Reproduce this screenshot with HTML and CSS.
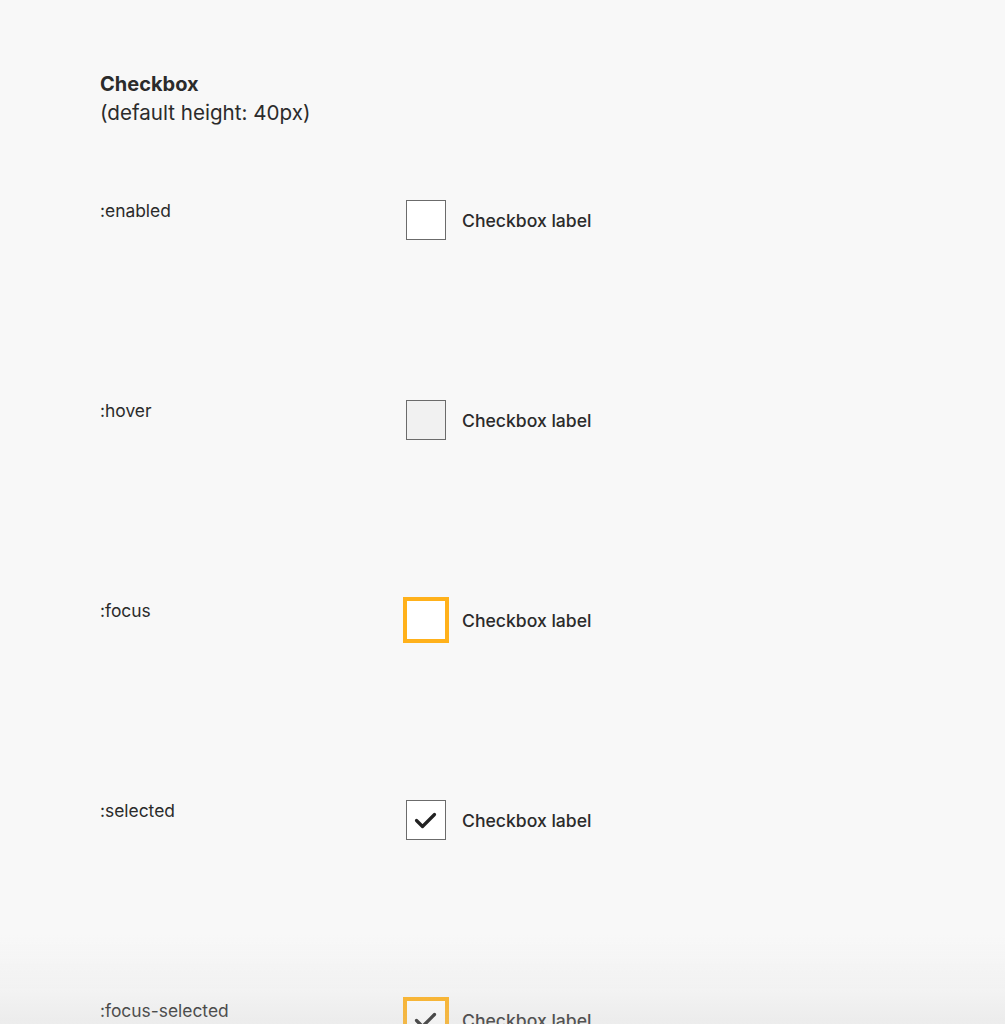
FILE: index.html
```html
<!DOCTYPE html>
<html lang="en">
<head>
<meta charset="utf-8">
<title>Checkbox</title>
<link rel="stylesheet" href="styles.css">
</head>
<body>
<main class="page">
  <header class="intro">
    <h1 class="title">Checkbox</h1>
    <p class="subtitle">(default height: 40px)</p>
  </header>
  <section class="states">
    <div class="row">
      <div class="state">:enabled</div>
      <label class="cb">
        <span class="box"></span>
        <span class="cb-label">Checkbox label</span>
      </label>
    </div>
    <div class="row">
      <div class="state">:hover</div>
      <label class="cb">
        <span class="box box-hover"></span>
        <span class="cb-label">Checkbox label</span>
      </label>
    </div>
    <div class="row">
      <div class="state">:focus</div>
      <label class="cb">
        <span class="box box-focus"></span>
        <span class="cb-label">Checkbox label</span>
      </label>
    </div>
    <div class="row">
      <div class="state">:selected</div>
      <label class="cb">
        <span class="box"><svg class="check" viewBox="0 0 40 40" width="40" height="40"><path d="M10.5 20.5 L16.5 26.5 L28.5 14.5" fill="none" stroke="#222" stroke-width="3.2" stroke-linecap="round" stroke-linejoin="round"/></svg></span>
        <span class="cb-label">Checkbox label</span>
      </label>
    </div>
    <div class="row">
      <div class="state">:focus-selected</div>
      <label class="cb">
        <span class="box box-focus"><svg class="check" viewBox="0 0 40 40" width="40" height="40"><path d="M10.5 20.5 L16.5 26.5 L28.5 14.5" fill="none" stroke="#222" stroke-width="3.2" stroke-linecap="round" stroke-linejoin="round"/></svg></span>
        <span class="cb-label">Checkbox label</span>
      </label>
    </div>
  </section>
</main>
<div class="fade"></div>
</body>
</html>
```

FILE: styles.css
```css
html, body {
  margin: 0;
  padding: 0;
  background: #f8f8f8;
  color: #2b2b2b;
  font-family: Inter, Roboto, "Liberation Sans", sans-serif;
}

.page {
  padding: 72px 0 0 100px;
}

.intro {
  margin: 0;
}

.title {
  margin: 0;
  font-size: 20px;
  line-height: 24px;
  font-weight: 700;
  color: #2b2b2b;
}

.subtitle {
  margin: 5px 0 0;
  font-size: 20.6px;
  line-height: 24px;
  font-weight: 400;
  color: #2b2b2b;
}

.states {
  margin-top: 75px;
}

.row {
  display: grid;
  grid-template-columns: 306px auto;
  align-items: start;
  height: 200px;
}

.state {
  font-size: 17.4px;
  line-height: 22px;
  color: #2b2b2b;
}

.cb {
  display: flex;
  align-items: center;
  gap: 16px;
}

.box {
  box-sizing: border-box;
  width: 40px;
  height: 40px;
  border: 1px solid #6b6b6b;
  background: #ffffff;
  display: flex;
  align-items: center;
  justify-content: center;
  flex: none;
}

.box-hover {
  background: #f1f1f1;
}

.box-focus {
  border-color: #ffb11b;
  box-shadow: 0 0 0 3px #ffb11b;
}

.check {
  display: block;
  flex: none;
}

.cb-label {
  font-size: 17.6px;
  font-weight: 500;
  line-height: 22px;
  padding-top: 2px;
  color: #2b2b2b;
}

.fade {
  position: fixed;
  left: 0;
  right: 0;
  bottom: 0;
  height: 90px;
  pointer-events: none;
  background: linear-gradient(to bottom, rgba(205,205,205,0) 0%, rgba(205,205,205,0.12) 60%, rgba(205,205,205,0.26) 100%);
}
```
